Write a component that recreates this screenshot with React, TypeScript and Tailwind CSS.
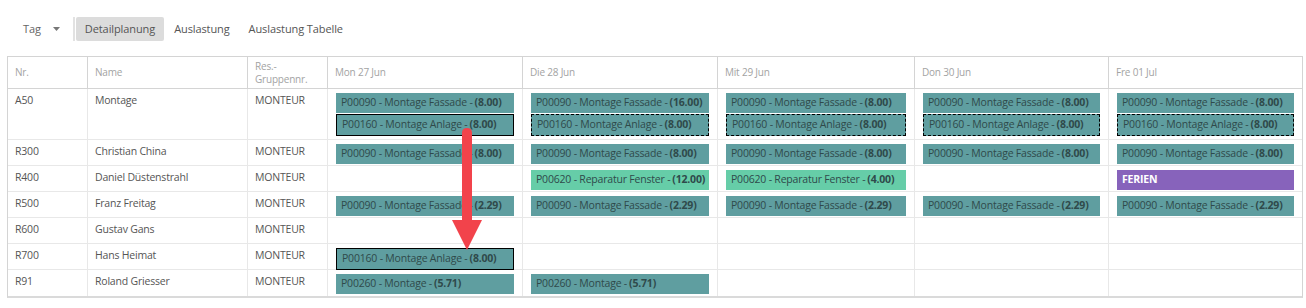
type Kind = 'teal' | 'green' | 'purple';
type Bar = { label: string; hours?: string; kind?: Kind; border?: 'solid' | 'dashed' };

interface Row {
  nr: string;
  name: string;
  group: string;
  days: Bar[][];
}

const days = ['Mon 27 Jun', 'Die 28 Jun', 'Mit 29 Jun', 'Don 30 Jun', 'Fre 01 Jul'];

const fassade = (h: string): Bar => ({ label: 'P00090 - Montage Fassade - ', hours: `(${h})` });
const anlage = (border: 'solid' | 'dashed'): Bar => ({
  label: 'P00160 - Montage Anlage - ',
  hours: '(8.00)',
  border,
});

const rows: Row[] = [
  {
    nr: 'A50',
    name: 'Montage',
    group: 'MONTEUR',
    days: [
      [fassade('8.00'), anlage('solid')],
      [fassade('16.00'), anlage('dashed')],
      [fassade('8.00'), anlage('dashed')],
      [fassade('8.00'), anlage('dashed')],
      [fassade('8.00'), anlage('dashed')],
    ],
  },
  {
    nr: 'R300',
    name: 'Christian China',
    group: 'MONTEUR',
    days: [[fassade('8.00')], [fassade('8.00')], [fassade('8.00')], [fassade('8.00')], [fassade('8.00')]],
  },
  {
    nr: 'R400',
    name: 'Daniel Düstenstrahl',
    group: 'MONTEUR',
    days: [
      [],
      [{ label: 'P00620 - Reparatur Fenster - ', hours: '(12.00)', kind: 'green' }],
      [{ label: 'P00620 - Reparatur Fenster - ', hours: '(4.00)', kind: 'green' }],
      [],
      [{ label: 'FERIEN', kind: 'purple' }],
    ],
  },
  {
    nr: 'R500',
    name: 'Franz Freitag',
    group: 'MONTEUR',
    days: [[fassade('2.29')], [fassade('2.29')], [fassade('2.29')], [fassade('2.29')], [fassade('2.29')]],
  },
  { nr: 'R600', name: 'Gustav Gans', group: 'MONTEUR', days: [[], [], [], [], []] },
  { nr: 'R700', name: 'Hans Heimat', group: 'MONTEUR', days: [[anlage('solid')], [], [], [], []] },
  {
    nr: 'R91',
    name: 'Roland Griesser',
    group: 'MONTEUR',
    days: [
      [{ label: 'P00260 - Montage - ', hours: '(5.71)' }],
      [{ label: 'P00260 - Montage - ', hours: '(5.71)' }],
      [],
      [],
      [],
    ],
  },
];

function PlanBar({ bar }: { bar: Bar }) {
  const bg =
    bar.kind === 'green' ? 'bg-[#66cda8]' : bar.kind === 'purple' ? 'bg-[#8763bb]' : 'bg-[#5f9ea0]';
  const border =
    bar.border === 'solid'
      ? 'border border-black h-[22px] pl-[5px]'
      : bar.border === 'dashed'
        ? 'border border-dashed border-black h-[22px] pl-[5px]'
        : 'h-[20px] pl-[5px]';

  if (bar.kind === 'purple') {
    return (
      <div className={`${bg} ${border} flex items-center text-[10.5px] font-bold text-white tracking-[-0.2px]`}>
        {bar.label}
      </div>
    );
  }

  return (
    <div
      className={`${bg} ${border} flex items-center text-[10.5px] tracking-[-0.2px] text-[#2f4a4b] whitespace-nowrap overflow-hidden`}
    >
      {bar.label}
      <span className="font-bold ml-[2px]">{bar.hours}</span>
    </div>
  );
}

const gridCols = 'grid grid-cols-[80px_160px_80px_195px_195px_197px_194px_1fr]';

export default function App() {
  return (
    <div
      className="w-[1306px] h-[308px] bg-white relative text-[#555] overflow-hidden"
      style={{ fontFamily: '"Open Sans", "Noto Sans", sans-serif' }}
    >
      {/* toolbar */}
      <div className="flex items-center h-[56px] pt-[2px] pl-[23px] text-[11px] tracking-[-0.1px]">
        <div className="flex items-center text-[#666]">
          Tag
          <svg width="7" height="4" viewBox="0 0 7 4" className="ml-[12px]">
            <path d="M0 0 L7 0 L3.5 4 Z" fill="#777" />
          </svg>
        </div>
        <div className="ml-[13px] w-[2px] h-[24px] border-x border-[#e2e2e2]" />
        <div className="ml-px h-[24px] px-[9px] flex items-center bg-[#dcdcdc] rounded-[2px] text-[#555]">
          Detailplanung
        </div>
        <div className="ml-[10px] text-[#555]">Auslastung</div>
        <div className="ml-[19px] text-[#555]">Auslastung Tabelle</div>
      </div>

      {/* planning table */}
      <div className="ml-[7px] w-[1296px] border border-[#d4d4d4] border-b-2 border-b-[#dadada]">
        <div
          className={`${gridCols} h-[32px] border-b border-[#d4d4d4] text-[10px] tracking-[-0.2px] text-[#a3a3a3]`}
        >
          <div className="border-r border-[#d4d4d4] flex items-center pl-[7px]">Nr.</div>
          <div className="border-r border-[#d4d4d4] flex items-center pl-[7px]">Name</div>
          <div className="border-r border-[#d4d4d4] flex flex-col justify-center pl-[7px] leading-[13px]">
            <span>Res.-</span>
            <span>Gruppennr.</span>
          </div>
          {days.map((d, i) => (
            <div
              key={d}
              className={`flex items-center pl-[7px] ${i < 4 ? 'border-r border-[#d4d4d4]' : ''}`}
            >
              {d}
            </div>
          ))}
        </div>

        {rows.map((row, ri) => (
          <div
            key={row.nr}
            className={`${gridCols} text-[10.5px] tracking-[-0.2px] ${row.nr === 'A50' ? 'h-[51px]' : 'h-[26px]'} ${
              ri < rows.length - 1 ? 'border-b border-[#e8e8e8]' : ''
            }`}
          >
            <div className="border-r border-[#e8e8e8] pl-[7px] pt-[4px]">{row.nr}</div>
            <div className="border-r border-[#e8e8e8] pl-[7px] pt-[4px]">{row.name}</div>
            <div className="border-r border-[#e8e8e8] pl-[7px] pt-[4px]">{row.group}</div>
            {row.days.map((bars, di) => (
              <div
                key={di}
                className={`flex flex-col gap-px pl-[8px] pr-[8px] pt-[4px] ${di < 4 ? 'border-r border-[#e8e8e8]' : ''}`}
              >
                {bars.map((b, bi) => (
                  <PlanBar key={bi} bar={b} />
                ))}
              </div>
            ))}
          </div>
        ))}
      </div>

      {/* drag arrow */}
      <svg className="absolute left-[450px] top-[127px]" width="34" height="126" viewBox="0 0 34 126">
        <path d="M12 6 Q12 1 17 1 Q22 1 22 6 L22 93 L32 93 L17 123 L2 93 L12 93 Z" fill="#f2434b" />
      </svg>
    </div>
  );
}
